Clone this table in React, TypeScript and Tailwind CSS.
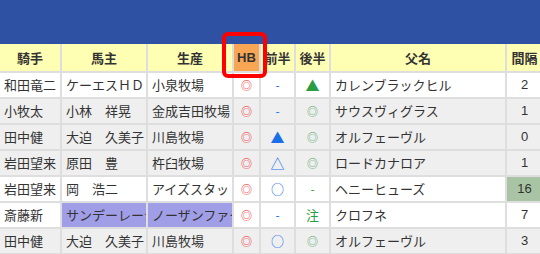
import React from "react";

type Mark = { t: string; c: string };

type Row = {
  jockey: string;
  owner: string;
  breeder: string;
  hb: Mark;
  first: Mark;
  second: Mark;
  sire: string;
  gap: string;
  gray: boolean;
  hiOwner?: boolean;
  hiGap?: boolean;
};

const red = "text-[#ee1c25]";
const blue = "text-[#1a6fe8]";
const green = "text-[#2a9d44]";
const ring = "text-[#4aa35a]";

const rows: Row[] = [
  { jockey: "和田竜二", owner: "ケーエスＨＤ", breeder: "小泉牧場", hb: { t: "◎", c: red }, first: { t: "-", c: blue }, second: { t: "▲", c: green }, sire: "カレンブラックヒル", gap: "2", gray: false },
  { jockey: "小牧太", owner: "小林　祥晃", breeder: "金成吉田牧場", hb: { t: "◎", c: red }, first: { t: "-", c: blue }, second: { t: "◎", c: ring }, sire: "サウスヴィグラス", gap: "1", gray: true },
  { jockey: "田中健", owner: "大迫　久美子", breeder: "川島牧場", hb: { t: "◎", c: red }, first: { t: "▲", c: blue }, second: { t: "◎", c: ring }, sire: "オルフェーヴル", gap: "0", gray: true },
  { jockey: "岩田望来", owner: "原田　豊", breeder: "杵臼牧場", hb: { t: "◎", c: red }, first: { t: "△", c: blue }, second: { t: "◎", c: ring }, sire: "ロードカナロア", gap: "1", gray: true },
  { jockey: "岩田望来", owner: "岡　浩二", breeder: "アイズスタッド", hb: { t: "◎", c: red }, first: { t: "○", c: blue }, second: { t: "-", c: green }, sire: "ヘニーヒューズ", gap: "16", gray: false, hiGap: true },
  { jockey: "斎藤新", owner: "サンデーレーシング", breeder: "ノーザンファーム", hb: { t: "◎", c: red }, first: { t: "-", c: blue }, second: { t: "注", c: green }, sire: "クロフネ", gap: "7", gray: false, hiOwner: true },
  { jockey: "田中健", owner: "大迫　久美子", breeder: "川島牧場", hb: { t: "◎", c: red }, first: { t: "○", c: blue }, second: { t: "◎", c: ring }, sire: "オルフェーヴル", gap: "3", gray: true },
];

const cell = "border-2 border-[#dedede] h-[26px] p-0 overflow-hidden whitespace-nowrap";

function markSize(t: string) {
  if (t === "◎") return "text-[11px]";
  if (t === "○") return "text-[13px]";
  if (t === "-") return "text-[12px]";
  if (t === "注") return "text-[13px]";
  return "text-[14px]";
}

export default function App() {
  return (
    <div
      className="w-[540px] h-[254px] overflow-hidden bg-white text-[13px] text-[#333]"
      style={{ fontFamily: '"Noto Sans CJK JP", "Noto Sans", sans-serif' }}
    >
      <div className="h-[44px] bg-[#2f51a3]" />
      <div className="relative">
        <table className="table-fixed border-collapse w-[544px] -ml-[2px]">
          <colgroup>
            <col className="w-[62px]" />
            <col className="w-[86px]" />
            <col className="w-[86px]" />
            <col className="w-[27px]" />
            <col className="w-[35px]" />
            <col className="w-[35px]" />
            <col className="w-[176px]" />
            <col className="w-[37px]" />
          </colgroup>
          <thead>
            <tr className="bg-[#ffffb3] font-bold text-[#333]">
              <th className={`${cell} h-[28px] border-t-0`}>騎手</th>
              <th className={`${cell} h-[28px] border-t-0`}>馬主</th>
              <th className={`${cell} h-[28px] border-t-0`}>生産</th>
              <th className={`${cell} h-[28px] border-t-0 bg-[#f9a654] font-[Liberation_Sans] text-[13px]`}>HB</th>
              <th className={`${cell} h-[28px] border-t-0`}>前半</th>
              <th className={`${cell} h-[28px] border-t-0`}>後半</th>
              <th className={`${cell} h-[28px] border-t-0`}>父名</th>
              <th className={`${cell} h-[28px] border-t-0`}>間隔</th>
            </tr>
          </thead>
          <tbody>
            {rows.map((r, i) => (
              <tr key={i} className={r.gray ? "bg-[#efefef]" : "bg-white"}>
                <td className={`${cell} pl-[4px]`}>{r.jockey}</td>
                <td className={`${cell} pl-[4px] ${r.hiOwner ? "bg-[#a09ee6]" : ""}`}>{r.owner}</td>
                <td className={`${cell} pl-[4px] ${r.hiOwner ? "bg-[#a09ee6]" : ""}`}>{r.breeder}</td>
                <td className={`${cell} text-center ${markSize(r.hb.t)} ${r.hb.c}`}>{r.hb.t}</td>
                <td className={`${cell} text-center ${markSize(r.first.t)} ${r.first.c}`}>{r.first.t}</td>
                <td className={`${cell} text-center ${markSize(r.second.t)} ${r.second.c}`}>{r.second.t}</td>
                <td className={`${cell} pl-[4px]`}>{r.sire}</td>
                <td className={`${cell} text-center font-[Liberation_Sans] ${r.hiGap ? "bg-[#a9c4a4]" : ""}`}>{r.gap}</td>
              </tr>
            ))}
          </tbody>
        </table>
        <div className="absolute left-[222px] top-[-12px] w-[45px] h-[46px] border-4 border-[#f00] rounded-[6px]" />
      </div>
    </div>
  );
}
